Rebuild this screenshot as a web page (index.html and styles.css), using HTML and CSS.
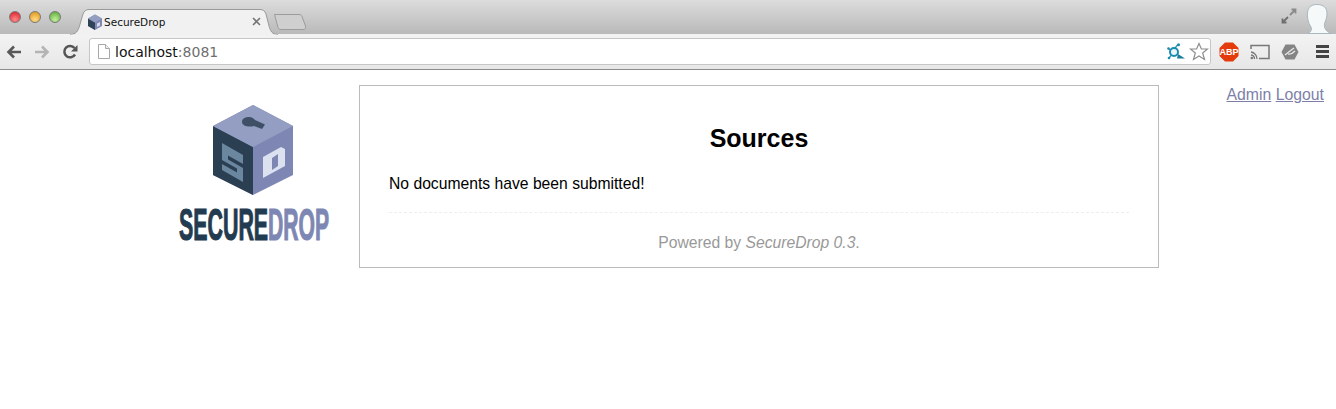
FILE: index.html
```html
<!DOCTYPE html>
<html lang="en">
<head>
  <meta charset="UTF-8">
  <meta name="viewport" content="width=device-width, initial-scale=1.0">
  <title>SecureDrop</title>
  <link rel="stylesheet" href="styles.css">
</head>
<body>
  <header class="browser">
    <div class="tabstrip">
      <div class="traffic">
        <span class="dot dot-red"></span>
        <span class="dot dot-yellow"></span>
        <span class="dot dot-green"></span>
      </div>
      <div class="tab">
        <svg class="tab-shape" width="208" height="26" viewBox="0 0 208 26">
          <path d="M0 25.500C6 25.500 8 22 9.500 17L13 5C14 2 16 .5 19 .5H190C193 .5 195 2 196 5L199 17C200.500 22 202 25.500 208 25.500" fill="#f1f1f1" stroke="#9a9a9a"/>
          <path d="M.5 26H207.500" stroke="#f1f1f1"/>
        </svg>
        <svg class="favicon" width="16" height="16" viewBox="0 0 16 16">
          <path d="M8 .5L15 4.500V12L8 16L1 12V4.500Z" fill="#8089b4"/>
          <path d="M1 4.500L8 8.500V16L1 12Z" fill="#2d4358"/>
          <path d="M8 .5L15 4.500L8 8.500L1 4.500Z" fill="#939ec0"/>
          <path d="M10 9.500L13 8V11.500L10 13Z" fill="#d5dbea"/>
        </svg>
        <span class="tab-title">SecureDrop</span>
        <svg class="tab-close" width="9" height="9" viewBox="0 0 9 9">
          <path d="M1 1L8 8M8 1L1 8" stroke="#777" stroke-width="1.600"/>
        </svg>
      </div>
      <svg class="newtab" width="34" height="18" viewBox="0 0 34 18">
        <path d="M1.500 1.500H26C27.500 1.500 28.500 2 29 3.500L32.500 13C33 15 32 16.500 30 16.500H8C6.500 16.500 5.500 16 5 14.500Z" fill="#cfcfcf" stroke="#9c9c9c"/>
      </svg>
      <div class="strip-right">
        <svg width="16" height="16" viewBox="0 0 16 16">
          <path d="M9 7L14 2M10.500 1.500H14.500V5.500" fill="none" stroke="#8a8a8a" stroke-width="1.800"/>
          <path d="M7 9L2 14M1.500 10.500V14.500H5.500" fill="none" stroke="#6f6f6f" stroke-width="1.800"/>
        </svg>
        <svg class="profile" width="26" height="30" viewBox="0 0 26 30">
          <path d="M2 29.500C5 28 6 26 5 23C2 19 1 13 1.500 8C2.500 2.500 6 .5 11 .5C17 .5 21 3.500 21 9C21 13 20 16 18.500 19.500C18 23 19 27 25 29.500Z" fill="#f6f9fa" stroke="#a9b8bd"/>
        </svg>
      </div>
    </div>
    <div class="toolbar">
      <svg class="nav-icon" width="16" height="14" viewBox="0 0 16 14">
        <path d="M15 7H3M8 1.500L2.500 7L8 12.500" fill="none" stroke="#585858" stroke-width="2.600"/>
      </svg>
      <svg class="nav-icon" width="16" height="14" viewBox="0 0 16 14">
        <path d="M1 7H13M8 1.500L13.500 7L8 12.500" fill="none" stroke="#b4b4b4" stroke-width="2.600"/>
      </svg>
      <svg class="nav-icon" width="16" height="16" viewBox="0 0 16 16">
        <path d="M13 10.500A5.700 5.700 0 1 1 12.500 4" fill="none" stroke="#555" stroke-width="2.500"/>
        <path d="M15.500 1V7.500H9Z" fill="#555"/>
      </svg>
      <div class="omnibox">
        <svg width="12" height="15" viewBox="0 0 12 15">
          <path d="M.5 .5H7.500L11.500 4.500V14.500H.5Z" fill="#fff" stroke="#a8a8a8"/>
          <path d="M7.500 .5V4.500H11.500" fill="#eee" stroke="#a8a8a8"/>
        </svg>
        <span class="url">localhost<span class="url-port">:8081</span></span>
        <svg class="omni-ext" width="18" height="17" viewBox="0 0 18 17">
          <path d="M11 1.500L8 5M4 7L1 5.500M4.500 12L2 15" fill="none" stroke="#2a93b3" stroke-width="1.200"/>
          <circle cx="11.500" cy="1.800" r="1.500" fill="#1a8cae"/>
          <circle cx="1.500" cy="5.500" r="1.300" fill="#1a8cae"/>
          <circle cx="2" cy="15" r="1.300" fill="#1a8cae"/>
          <circle cx="7" cy="9" r="4" fill="#e8f5f9" stroke="#1a8cae" stroke-width="2"/>
          <path d="M11 11L18 15.500H10Z" fill="#1a7d9c"/>
        </svg>
        <svg width="20" height="19" viewBox="0 0 20 19">
          <path d="M10 1.500L12.400 7H18.500L13.700 11L15.500 17.500L10 14L4.500 17.500L6.300 11L1.500 7H7.600Z" fill="#fff" stroke="#8e8e8e" stroke-width="1.200"/>
        </svg>
      </div>
      <div class="extensions">
        <svg width="20" height="20" viewBox="0 0 20 20">
          <path d="M6 .5H14L19.500 6V14L14 19.500H6L.5 14V6Z" fill="#e33b0c"/>
          <text x="10" y="13" class="abp-text" text-anchor="middle">ABP</text>
        </svg>
        <svg width="20" height="16" viewBox="0 0 20 16">
          <path d="M1 5V1.500H19V14.500H9" fill="none" stroke="#777" stroke-width="1.500"/>
          <path d="M1 8A7 7 0 0 1 7 15M1 11A4 4 0 0 1 4.500 15" fill="none" stroke="#777" stroke-width="1.300"/>
          <circle cx="1.800" cy="14" r="1.300" fill="#777"/>
        </svg>
        <svg width="18" height="16" viewBox="0 0 18 16">
          <path d="M4.500 .5H13.500L17.500 8L13.500 15.500H4.500L.5 8Z" fill="#848484"/>
          <path d="M4 11L9 7L13 4M7 10C10 11 12 9 14 7" fill="none" stroke="#e8e8e8" stroke-width="1.300"/>
        </svg>
        <div class="menu-icon"><span></span><span></span><span></span></div>
      </div>
    </div>
  </header>

  <div class="page">
    <div class="logo-col">
      <svg class="logo" width="152" height="150" viewBox="0 0 152 150">
        <path d="M75 0L115 21V70L75 90L35 70V21Z" fill="#7e87b3"/>
        <path d="M35 21L75 42V90L35 70Z" fill="#2a3f52"/>
        <path d="M75 0L115 21L75 42L35 21Z" fill="#939ec2"/>
        <path d="M64 17C64 13 68 12 71 12C74 12 76 13.500 77 15L87 19.500L84 24L76 21C71 22.500 64 21 64 17Z" fill="#3e4f66"/>
        <path d="M44 38L65 50V77L44 65Z" fill="#6b87a0"/>
        <path d="M50 50.400L65 59V63L50 54.400Z" fill="#2a3f52"/>
        <path d="M44 55L59 63.600V67.600L44 59Z" fill="#2a3f52"/>
        <path d="M85 52L103 42L107 44V61L85 73Z" fill="#dbe1ef"/>
        <path d="M94 53L100 49V61L94 65Z" fill="#7e87b3"/>
        <text class="logo-text logo-secure" transform="translate(1 135) scale(.486 1)">SECURE</text>
        <text class="logo-text logo-drop" transform="translate(90 135) scale(.48 1)">DROP</text>
      </svg>
    </div>
    <main class="content">
      <h1>Sources</h1>
      <p class="message">No documents have been submitted!</p>
      <hr class="divider">
      <p class="powered">Powered by <em>SecureDrop 0.3</em>.</p>
    </main>
    <nav class="user-links">
      <a href="#">Admin</a>
      <a href="#">Logout</a>
    </nav>
  </div>
</body>
</html>
```

FILE: styles.css
```css
body {
  font-family: "Liberation Sans", Arial, sans-serif;
  margin: 0;
  padding: 0;
  background-color: #fff;
  color: #000;
}

/* browser window */
.tabstrip {
  display: flex;
  align-items: flex-end;
  height: 34px;
  background: linear-gradient(#dcdcdc, #b9b9b9);
}
.traffic {
  display: flex;
  gap: 8px;
  align-self: flex-start;
  box-sizing: border-box;
  width: 70px;
  margin-top: 11px;
  padding-left: 9px;
  flex-shrink: 0;
}
.dot {
  width: 12px;
  height: 12px;
  border-radius: 50%;
  border: 1px solid #7a7a7a;
  box-sizing: border-box;
}
.dot-red { background: radial-gradient(circle at 50% 75%, #ff8a8a, #d9141f); }
.dot-yellow { background: radial-gradient(circle at 50% 75%, #ffdb85, #dd8e0c); }
.dot-green { background: radial-gradient(circle at 50% 75%, #c4f09a, #4fa52e); }
.tab {
  position: relative;
  display: flex;
  align-items: center;
  width: 208px;
  height: 25px;
  box-sizing: border-box;
  padding: 0 17px 0 17px;
  flex-shrink: 0;
}
.tab-shape {
  position: absolute;
  left: 0;
  top: 0;
}
.favicon, .tab-title, .tab-close {
  position: relative;
}
.tab-title {
  flex: 1;
  margin-left: 1px;
  font-family: "DejaVu Sans", sans-serif;
  font-size: 10.500px;
  color: #111;
}
.newtab {
  align-self: flex-start;
  margin: 13px 0 0 -5px;
}
.strip-right {
  display: flex;
  align-items: flex-end;
  gap: 9px;
  margin-left: auto;
  padding-right: 4px;
  height: 33px;
}
.strip-right svg:first-child {
  margin-bottom: 10px;
}
.profile {
  display: block;
}
.toolbar {
  display: flex;
  align-items: center;
  height: 36px;
  box-sizing: border-box;
  padding: 0 6px;
  background: linear-gradient(#f3f3f3, #e7e7e7);
  border-bottom: 1px solid #8c8c8c;
}
.nav-icon {
  margin-right: 12px;
}
.omnibox {
  display: flex;
  align-items: center;
  width: 1122px;
  height: 27px;
  margin-left: -1px;
  box-sizing: border-box;
  padding: 0 1px 0 8px;
  background-color: #fff;
  border: 1px solid #c6c6c6;
  border-radius: 3px;
}
.url {
  flex: 1;
  margin-left: 5px;
  font-family: "DejaVu Sans", sans-serif;
  font-size: 14px;
  color: #111;
}
.url-port {
  color: #6e6e6e;
}
.omni-ext {
  margin-right: 4px;
}
.extensions {
  display: flex;
  align-items: center;
  gap: 11px;
  margin-left: 8px;
}
.abp-text {
  font-family: "Liberation Sans", sans-serif;
  font-size: 9px;
  font-weight: bold;
  fill: #fff;
}
.menu-icon {
  display: flex;
  flex-direction: column;
  gap: 2px;
  width: 13px;
  margin-left: 6px;
}
.menu-icon span {
  height: 3px;
  background-color: #444;
}

/* page */
.page {
  display: grid;
  grid-template-columns: 359px 800px 1fr;
  padding-top: 15px;
}
.logo-col {
  display: flex;
  justify-content: flex-end;
  padding: 20px 29px 0 0;
}
.logo {
  display: block;
}
.logo-text {
  font-family: "Liberation Sans", sans-serif;
  font-size: 44px;
  font-weight: bold;
  stroke-width: 1.200px;
}
.logo-secure {
  fill: #233b50;
  stroke: #233b50;
}
.logo-drop {
  fill: #7e87b3;
  stroke: #7e87b3;
}
.content {
  box-sizing: border-box;
  height: 183px;
  padding: 0 29px;
  border: 1px solid #bbb;
}
h1 {
  margin: 38px 0 0;
  font-size: 25px;
  line-height: 28px;
  text-align: center;
}
.message {
  margin: 22px 0 0;
  font-size: 15.700px;
  line-height: 20px;
}
.divider {
  margin: 18px 0 0;
  border: 0;
  border-top: 1px dashed #eee;
}
.powered {
  margin: 20px 0 0;
  font-size: 15.700px;
  line-height: 20px;
  text-align: center;
  color: #999;
}
.user-links {
  padding: 0 12px 0 0;
  text-align: right;
  font-size: 15.800px;
  line-height: 20px;
}
.user-links a {
  color: #7d7fa8;
}
```
